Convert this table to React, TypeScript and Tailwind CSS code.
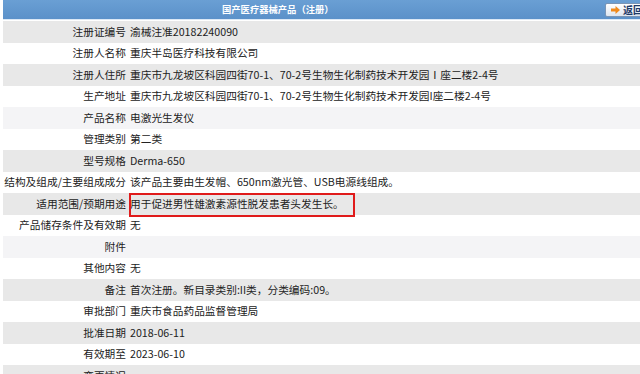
import * as React from 'react';

type Row = { label: string; value: string; bg: string };

const rows: Row[] = [
  { label: '注册证编号', value: '渝械注准20182240090', bg: 'bg-[#e8e8e8]' },
  { label: '注册人名称', value: '重庆半岛医疗科技有限公司', bg: 'bg-white' },
  { label: '注册人住所', value: '重庆市九龙坡区科园四街70-1、70-2号生物生化制药技术开发园Ⅰ座二楼2-4号', bg: 'bg-[#e8e8e8]' },
  { label: '生产地址', value: '重庆市九龙坡区科园四街70-1、70-2号生物生化制药技术开发园I座二楼2-4号', bg: 'bg-white' },
  { label: '产品名称', value: '电激光生发仪', bg: 'bg-[#f4f4f6]' },
  { label: '管理类别', value: '第二类', bg: 'bg-white' },
  { label: '型号规格', value: 'Derma-650', bg: 'bg-[#e8e8e8]' },
  { label: '结构及组成/主要组成成分', value: '该产品主要由生发帽、650nm激光管、USB电源线组成。', bg: 'bg-white' },
  { label: '适用范围/预期用途', value: '用于促进男性雄激素源性脱发患者头发生长。', bg: 'bg-[#e8e8e8]' },
  { label: '产品储存条件及有效期', value: '无', bg: 'bg-white' },
  { label: '附件', value: '', bg: 'bg-[#f4f4f6]' },
  { label: '其他内容', value: '无', bg: 'bg-white' },
  { label: '备注', value: '首次注册。新目录类别:II类，分类编码:09。', bg: 'bg-[#e8e8e8]' },
  { label: '审批部门', value: '重庆市食品药品监督管理局', bg: 'bg-white' },
  { label: '批准日期', value: '2018-06-11', bg: 'bg-[#e8e8e8]' },
  { label: '有效期至', value: '2023-06-10', bg: 'bg-white' },
  { label: '变更情况', value: '', bg: 'bg-[#e8e8e8]' },
];

export default function App() {
  return (
    <div
      className="relative h-[374px] w-[640px] overflow-hidden bg-white pl-[3px] text-[10.7px] text-[#222]"
      style={{ fontFamily: '"Noto Sans CJK SC", "Noto Sans", sans-serif' }}
    >
      <div className="flex h-[19px] items-center bg-gradient-to-b from-[#6a9fd4] to-[#5b91c9] pl-[219px]">
        <span className="text-[9.3px] font-bold text-white">国产医疗器械产品（注册）</span>
        <div className="ml-auto mr-[-20px] flex h-[14px] w-[55px] items-center gap-[3px] rounded-[2px] border border-[#7a95b5] bg-gradient-to-b from-white to-[#dde6f0] pl-[5px]">
          <svg width="9" height="8" viewBox="0 0 9 8">
            <path d="M0 2.5h4.5V0L9 4 4.5 8V5.5H0z" fill="#f08a1c" />
          </svg>
          <span className="text-[10px] font-bold text-[#1e3a66]">返回</span>
        </div>
      </div>
      <div className="h-[2px] border-t border-[#dbe8f5] bg-white" />
      {rows.map((r) => (
        <div key={r.label} className={`grid h-[21.5px] grid-cols-[124px_1fr] items-center ${r.bg}`}>
          <div className="whitespace-nowrap pr-[1px] text-right">{r.label}</div>
          <div className="whitespace-nowrap pl-[3px]">{r.value}</div>
        </div>
      ))}
      <div className="pointer-events-none absolute left-[129px] top-[193px] h-[24px] w-[226px] border-2 border-[#e01b1b]" />
    </div>
  );
}
